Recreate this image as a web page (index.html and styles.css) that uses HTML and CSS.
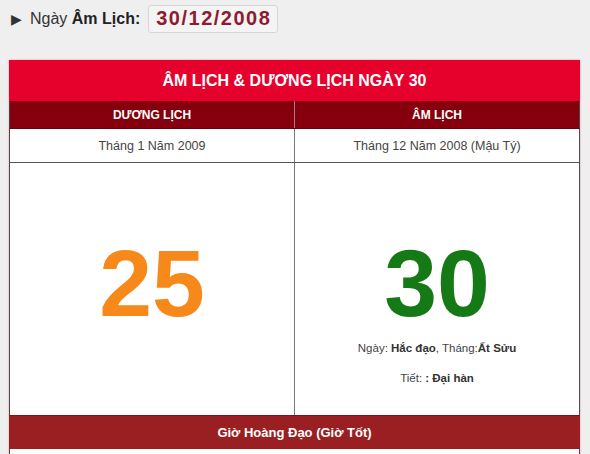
FILE: index.html
```html
<!DOCTYPE html>
<html lang="vi">
<head>
<meta charset="utf-8">
<title>Âm lịch</title>
<link rel="stylesheet" href="styles.css">
</head>
<body>
<div class="top">
  <span class="arrow">&#9654;</span>
  <span class="label">Ngày <b>Âm Lịch:</b></span>
  <span class="datebox">30/12/2008</span>
</div>
<div class="cal">
  <div class="title">ÂM LỊCH &amp; DƯƠNG LỊCH NGÀY 30</div>
  <div class="row head">
    <div class="cell">DƯƠNG LỊCH</div>
    <div class="cell">ÂM LỊCH</div>
  </div>
  <div class="row month">
    <div class="cell">Tháng 1 Năm 2009</div>
    <div class="cell">Tháng 12 Năm 2008 (Mậu Tý)</div>
  </div>
  <div class="row big">
    <div class="cell">
      <div class="num solar">25</div>
    </div>
    <div class="cell">
      <div class="num lunar">30</div>
      <div class="info">Ngày: <b>Hắc đạo</b>, Tháng:<b>Ất Sửu</b></div>
      <div class="info">Tiết: <b>: Đại hàn</b></div>
    </div>
  </div>
  <div class="foot">Giờ Hoàng Đạo (Giờ Tốt)</div>
  <div class="after"></div>
</div>
</body>
</html>
```
FILE: styles.css
```css
html, body {
  margin: 0;
  padding: 0;
  background: #efefef;
  font-family: "Liberation Sans", Arial, sans-serif;
  color: #333;
}
.top {
  display: flex;
  align-items: center;
  height: 29px;
  padding: 4px 0 0 11px;
}
.arrow {
  font-size: 14px;
  color: #333;
  width: 19px;
}
.label {
  font-size: 16px;
  color: #333;
}
.label b {
  color: #222;
}
.datebox {
  margin-left: 8px;
  height: 26px;
  padding: 0 6px 0 7px;
  display: flex;
  align-items: center;
  background: #f4f4f4;
  border: 1px solid #d6d6d6;
  border-radius: 3px;
  font-size: 20px;
  font-weight: bold;
  letter-spacing: 1.5px;
  color: #8e1b30;
}
.cal {
  margin: 27px 0 0 9px;
  width: 571px;
  box-shadow: 0 0 2px rgba(230, 0, 50, 0.35);
}
.title {
  height: 41px;
  background: #e6002c;
  color: #fff;
  font-weight: bold;
  font-size: 16px;
  display: flex;
  align-items: center;
  justify-content: center;
}
.row {
  display: grid;
  grid-template-columns: 284px 1fr;
  border-left: 1px solid #4a4a4a;
  border-right: 1px solid #4a4a4a;
}
.row .cell + .cell {
  border-left: 1px solid #777;
}
.head {
  height: 27px;
  background: #85000c;
  color: #fff;
  font-weight: bold;
  font-size: 12px;
  border-bottom: 1px solid #6a0008;
}
.head .cell {
  display: flex;
  align-items: center;
  justify-content: center;
}
.head .cell + .cell {
  border-left: 1px solid #a08080;
}
.month {
  height: 33px;
  background: #fff;
  font-size: 12.5px;
  color: #444;
  border-bottom: 1px solid #555;
}
.month .cell {
  display: flex;
  align-items: center;
  justify-content: center;
}
.big {
  height: 252px;
  background: #fff;
}
.big .cell {
  text-align: center;
  padding-top: 73px;
}
.num {
  font-size: 95px;
  line-height: 95px;
  font-weight: bold;
}
.solar { color: #f7891a; }
.lunar { color: #157a16; }
.info {
  font-size: 11.5px;
  line-height: 30px;
  color: #444;
}
.info b { color: #333; }
.num + .info { margin-top: 2px; }
.foot {
  height: 33px;
  background: #9a1f22;
  border-top: 1px solid #7a1418;
  color: #fff;
  font-weight: bold;
  font-size: 13px;
  display: flex;
  align-items: center;
  justify-content: center;
}
.after {
  height: 10px;
  background: #fff;
  border-left: 1px solid #4a4a4a;
  border-right: 1px solid #4a4a4a;
}
```
